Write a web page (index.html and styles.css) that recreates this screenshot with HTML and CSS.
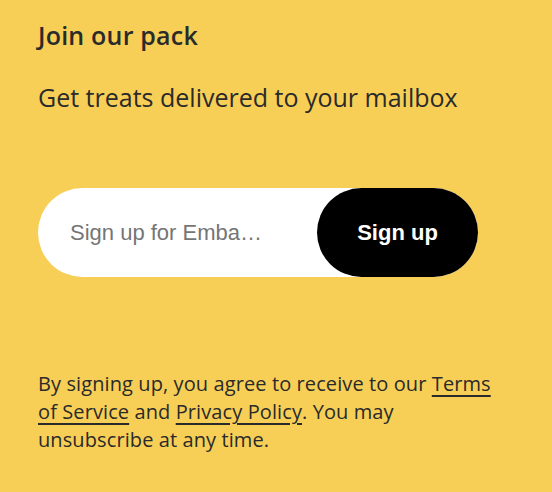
FILE: index.html
```html
<!DOCTYPE html>
<html lang="en">
<head>
<meta charset="utf-8">
<title>Join our pack</title>
<link rel="stylesheet" href="styles.css">
</head>
<body>
<section class="signup">
  <h2 class="signup-title">Join our pack</h2>
  <p class="signup-sub">Get treats delivered to your mailbox</p>
  <form class="signup-form" onsubmit="return false">
    <input class="signup-input" type="email" placeholder="Sign up for Emba…" aria-label="Email">
    <button class="signup-btn" type="submit">Sign up</button>
  </form>
  <p class="signup-legal">By signing up, you agree to receive to our <a href="#">Terms of Service</a> and <a href="#">Privacy Policy</a>. You may unsubscribe at any time.</p>
</section>
</body>
</html>
```
FILE: styles.css
```css
* { box-sizing: border-box; }
html, body { margin: 0; padding: 0; }
body {
  background: #f7cf57;
  color: #2a2a2a;
  font-family: "Open Sans", "DejaVu Sans", sans-serif;
}
.signup {
  padding: 20px 38px 0 38px;
}
.signup-title {
  margin: 0;
  font-size: 25px;
  line-height: 30px;
  font-weight: 600;
  letter-spacing: 0.2px;
}
.signup-sub {
  margin: 32px 0 0 0;
  font-size: 25px;
  line-height: 30px;
  font-weight: 400;
}
.signup-form {
  margin-top: 76px;
  width: 440px;
  height: 89px;
  display: flex;
  background: #ffffff;
  border-radius: 45px;
}
.signup-input {
  flex: 1;
  min-width: 0;
  border: 0;
  outline: none;
  background: transparent;
  padding: 0 0 0 32px;
  font-family: "Liberation Sans", Arial, sans-serif;
  font-size: 22px;
  color: #2a2a2a;
}
.signup-input::placeholder { color: #757575; }
.signup-btn {
  width: 161px;
  border: 0;
  border-radius: 45px;
  background: #000;
  color: #fff;
  font-family: "Liberation Sans", Arial, sans-serif;
  font-weight: 700;
  font-size: 22px;
  cursor: pointer;
}
.signup-legal {
  margin: 93px 0 0 0;
  max-width: 470px;
  font-size: 20px;
  line-height: 28px;
  letter-spacing: 0.1px;
}
.signup-legal a {
  color: inherit;
  text-decoration: underline;
  text-decoration-thickness: 1.5px;
  text-underline-offset: 4px;
}
```
